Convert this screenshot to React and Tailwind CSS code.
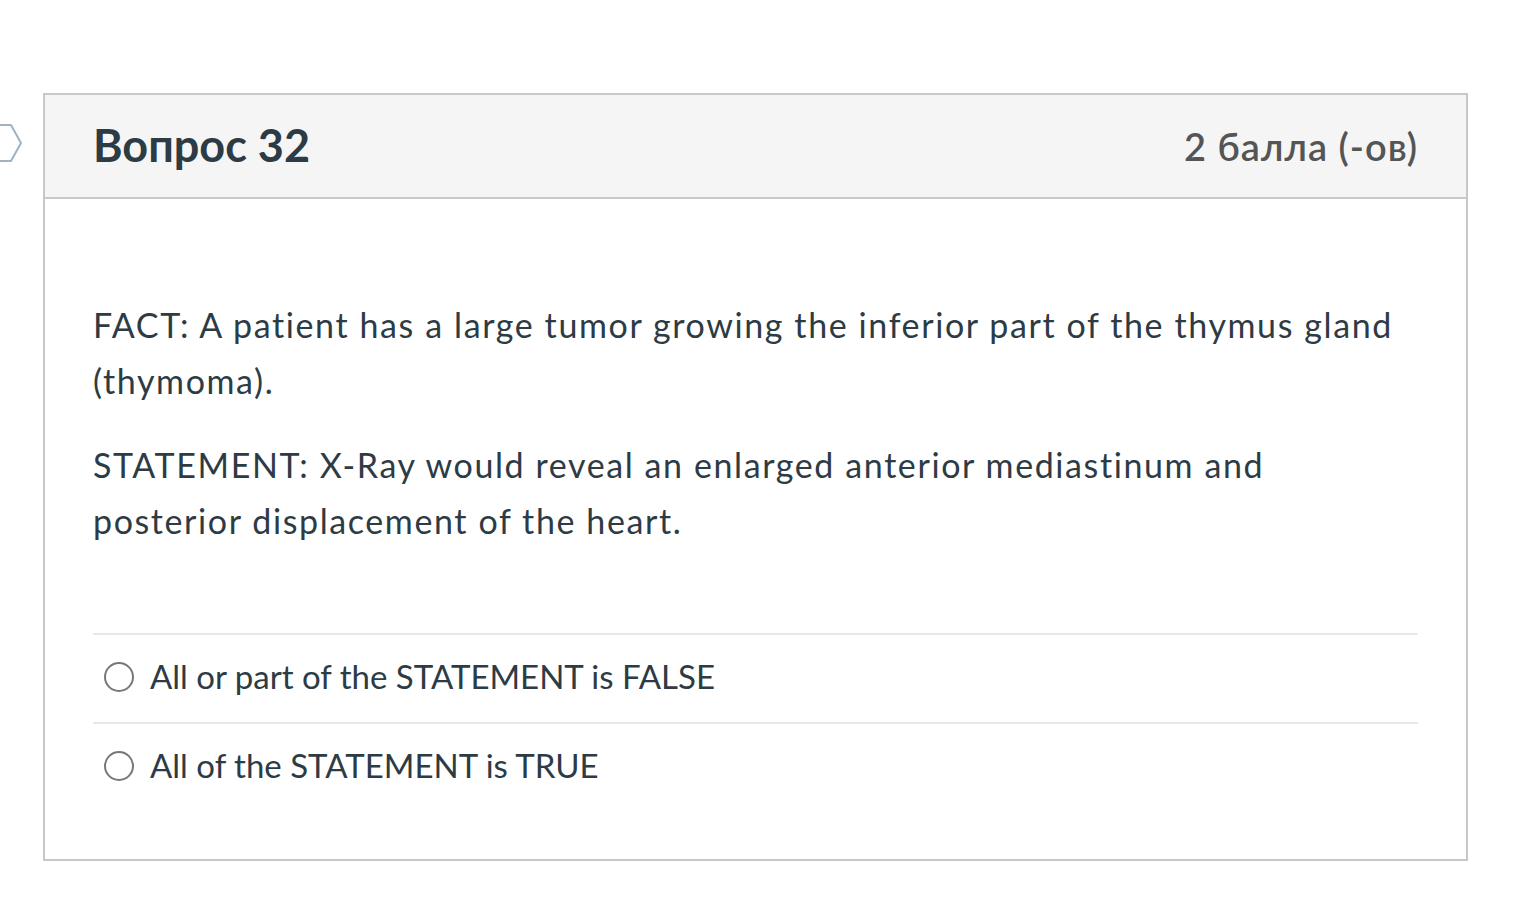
export default function App() {
	const options = ['All or part of the STATEMENT is FALSE', 'All of the STATEMENT is TRUE'];

	return (
		<div className="relative min-h-[916px] bg-white pt-[93px] pl-[43px]" style={{ fontFamily: 'Lato, "Noto Sans", sans-serif' }}>
			<svg className="absolute left-0 top-[123px]" width="26" height="42" viewBox="0 0 26 42" fill="none">
				<path d="M-4 2 H11 L21 20 L11 38 H-4" stroke="#9fb2c4" strokeWidth="2" strokeLinejoin="round" />
			</svg>

			<div className="w-[1425px] border-2 border-[#c8c8c8] bg-white">
				<div className="flex h-[104px] items-center justify-between border-b-2 border-[#c8c8c8] bg-[#f5f5f5] px-[48px]">
					<h2 className="text-[45px] font-bold text-[#2d3b45]">Вопрос 32</h2>
					<span className="text-[38px] font-semibold tracking-[1px] text-[#555]">2 балла (-ов)</span>
				</div>

				<div className="px-[48px] pt-[98px] pb-[48px]">
					<div className="text-[34px] leading-[56px] tracking-[1.6px] text-[#2d3b45]">
						<p>FACT: A patient has a large tumor growing the inferior part of the thymus gland (thymoma).</p>
						<p className="mt-[28px]">STATEMENT: X-Ray would reveal an enlarged anterior mediastinum and posterior displacement of the heart.</p>
					</div>

					<div className="mt-[84px]">
						{options.map((label) => (
							<label key={label} className="flex h-[89px] items-center gap-[16px] border-t-2 border-[#e8e8e8] pb-[3px] pl-[11px]">
								<span className="h-[30px] w-[30px] rounded-full border-2 border-[#777] bg-white" />
								<span className="text-[33px] text-[#2d3b45]">{label}</span>
							</label>
						))}
					</div>
				</div>
			</div>
		</div>
	);
}
